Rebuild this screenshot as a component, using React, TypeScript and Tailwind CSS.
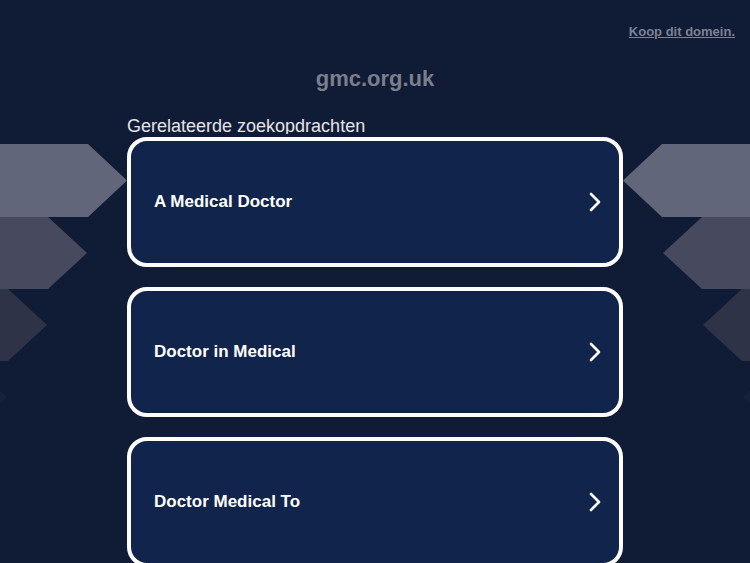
import React from "react";

const items = ["A Medical Doctor", "Doctor in Medical", "Doctor Medical To"];

function LeftShapes() {
  return (
    <svg className="absolute left-0 top-0 pointer-events-none" width="140" height="450" viewBox="0 0 140 450">
      <polygon points="0,144 88,144 127,180.5 88,217 0,217" fill="#62667a" />
      <polygon points="0,217 48,217 87,253 48,289 0,289" fill="#474a5e" />
      <polygon points="0,289 8,289 47,325 8,361 0,361" fill="#2f3348" />
      <polygon points="0,361 -32,361 7,397 -32,433 0,433" fill="#172039" />
    </svg>
  );
}

function RightShapes() {
  return (
    <svg className="absolute right-0 top-0 pointer-events-none" width="140" height="450" viewBox="610 0 140 450">
      <polygon points="750,144 662,144 623,180.5 662,217 750,217" fill="#62667a" />
      <polygon points="750,217 702,217 663,253 702,289 750,289" fill="#474a5e" />
      <polygon points="750,289 742,289 703,325 742,361 750,361" fill="#2f3348" />
      <polygon points="750,361 782,361 743,397 782,433 750,433" fill="#172039" />
    </svg>
  );
}

export default function App() {
  return (
    <div
      className="relative min-h-screen w-full overflow-hidden bg-[#101b36]"
      style={{ fontFamily: '"Liberation Sans", Arial, sans-serif' }}
    >
      <LeftShapes />
      <RightShapes />
      <div className="relative">
        <div className="flex justify-end pt-[24px] pr-[15px]">
          <a href="#" className="text-[13px] font-bold leading-[15px] text-[#7d8294] underline">
            Koop dit domein.
          </a>
        </div>
        <div className="mt-[27px] text-center text-[22px] font-bold leading-[25px] text-[#7b7f8c]">
          gmc.org.uk
        </div>
        <div className="mx-auto mt-[25px] w-[496px]">
          <div className="h-[18px] overflow-hidden text-[18px] leading-[21px] text-[#e4e4e8]">
            Gerelateerde zoekopdrachten
          </div>
          <div className="mt-[3px] flex flex-col gap-[20px]">
            {items.map((t) => (
              <a
                key={t}
                href="#"
                className="flex h-[130px] items-center justify-between rounded-[20px] border-4 border-white bg-[#11244c] pl-[23px] pr-[17px]"
              >
                <span className="text-[17px] font-bold text-white">{t}</span>
                <svg width="14" height="20" viewBox="0 0 14 20">
                  <path d="M3 2 L11 10 L3 18" fill="none" stroke="white" strokeWidth="2.6" strokeLinecap="round" strokeLinejoin="round" />
                </svg>
              </a>
            ))}
          </div>
        </div>
      </div>
    </div>
  );
}
